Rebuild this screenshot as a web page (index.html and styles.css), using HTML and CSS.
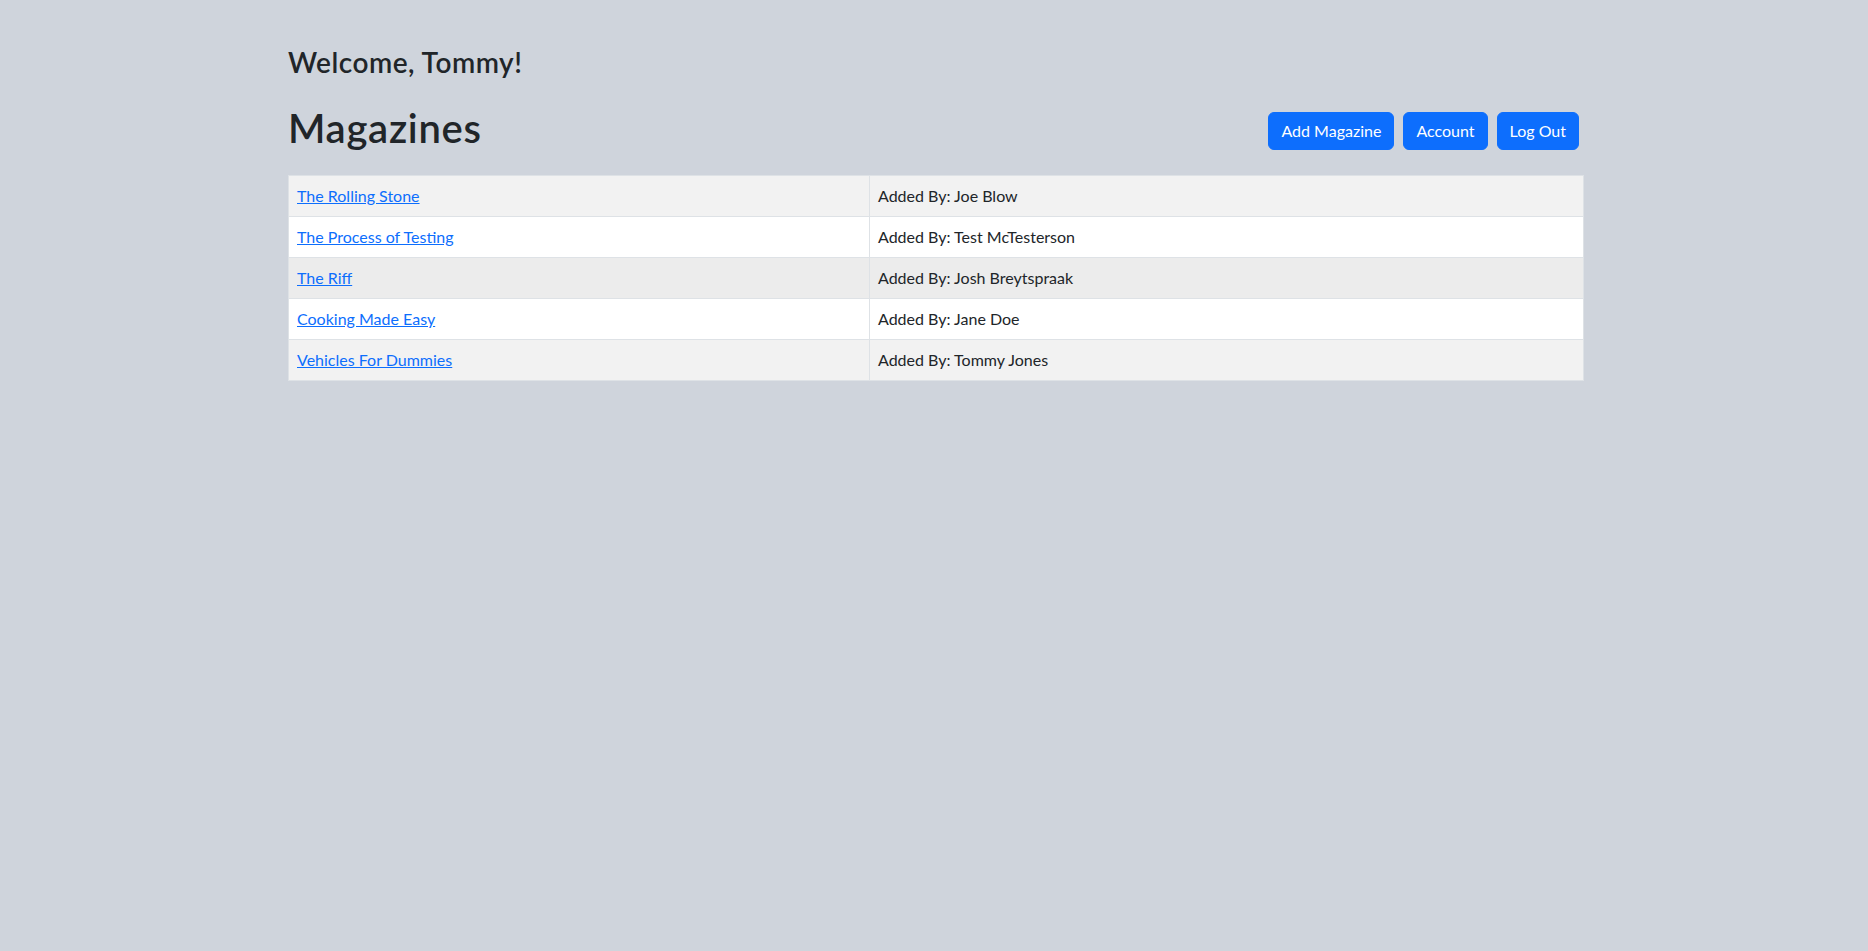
FILE: index.html
```html
<!DOCTYPE html>
<html lang="en">
<head>
<meta charset="utf-8">
<title>Magazines</title>
<link rel="stylesheet" href="styles.css">
</head>
<body>
<div class="container">
  <h3 class="welcome">Welcome, Tommy!</h3>
  <div class="header-row">
    <h1 class="title">Magazines</h1>
    <div class="actions">
      <a class="btn" href="#">Add Magazine</a>
      <a class="btn" href="#">Account</a>
      <a class="btn" href="#">Log Out</a>
    </div>
  </div>
  <table class="mag-table">
    <tbody>
      <tr class="stripe"><td class="c1"><a href="#">The Rolling Stone</a></td><td>Added By: Joe Blow</td></tr>
      <tr><td class="c1"><a href="#">The Process of Testing</a></td><td>Added By: Test McTesterson</td></tr>
      <tr class="hover"><td class="c1"><a href="#">The Riff</a></td><td>Added By: Josh Breytspraak</td></tr>
      <tr><td class="c1"><a href="#">Cooking Made Easy</a></td><td>Added By: Jane Doe</td></tr>
      <tr class="stripe"><td class="c1"><a href="#">Vehicles For Dummies</a></td><td>Added By: Tommy Jones</td></tr>
    </tbody>
  </table>
</div>
</body>
</html>
```
FILE: styles.css
```css
* { box-sizing: border-box; }
body {
  margin: 0;
  background: #cfd4dc;
  color: #212529;
  font-family: Lato, "Noto Sans", sans-serif;
  font-size: 16px;
  line-height: 1.5;
}
.container {
  width: 1300px;
  margin: 0 auto;
  padding-left: 4px;
  padding-top: 46px;
}
.welcome {
  margin: 0 0 24px;
  font-size: 28px;
  font-weight: 600;
  line-height: 1.2;
  letter-spacing: 0.5px;
}
.header-row {
  display: flex;
  justify-content: space-between;
  align-items: flex-start;
}
.title {
  margin: 0;
  font-size: 40px;
  font-weight: 600;
  line-height: 1.2;
  letter-spacing: 0.7px;
}
.actions {
  display: flex;
  gap: 9px;
  margin-top: 8px;
  margin-right: 5px;
}
.btn {
  display: inline-block;
  padding: 6px 12px;
  border: 1px solid #0d6efd;
  border-radius: 6px;
  background: #0d6efd;
  color: #fff;
  text-decoration: none;
  font-size: 16px;
  line-height: 24px;
}
.mag-table {
  width: 1296px;
  margin-top: 23px;
  border-collapse: collapse;
  background: #fff;
}
.mag-table td {
  border: 1px solid #dee2e6;
  padding: 8px;
  line-height: 24px;
}
.mag-table .c1 { width: 581px; }
.mag-table tr.stripe td { background: #f2f2f2; }
.mag-table tr.hover td { background: #ececec; }
.mag-table a { color: #0d6efd; text-decoration: underline; }
```
